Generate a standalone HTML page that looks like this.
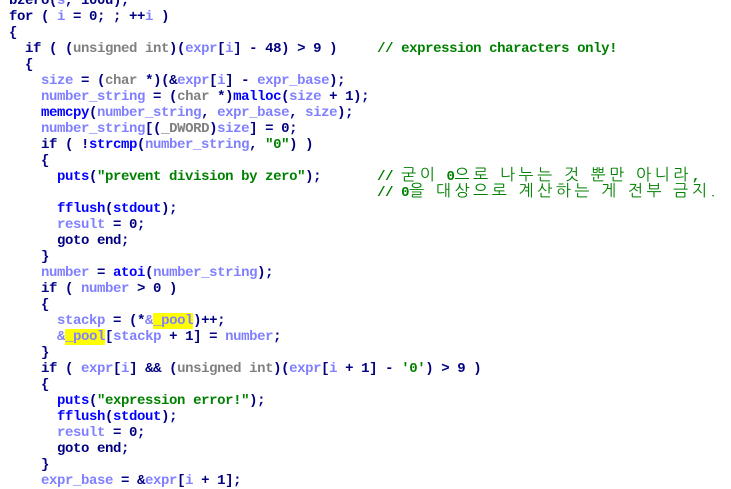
<!DOCTYPE html>
<html><head><meta charset="utf-8"><style>
html,body{margin:0;padding:0;background:#fff;width:731px;height:480px;overflow:hidden}
pre{position:absolute;left:9px;top:-7px;margin:0;font-family:"Liberation Mono",monospace;font-size:14px;letter-spacing:-0.4px;font-weight:bold;line-height:16px;color:#000080;white-space:pre}
.v{color:#8080ff}.f{color:#0000ff}.t{color:#808080}.s{color:#008000}.c{color:#008000}
.k{font-family:"NanumGothic","Noto Sans CJK KR",sans-serif;font-weight:normal;font-size:16px;line-height:0;letter-spacing:3.6px}
.h{background:#ffff00}
</style></head><body><pre>
bzero(<span class="v">s</span>, 100u);
for ( <span class="v">i</span> = 0; ; ++<span class="v">i</span> )
{
  if ( (<span class="t">unsigned int</span>)(<span class="v">expr</span>[<span class="v">i</span>] - 48) &gt; 9 )     <span class="c">// expression characters only!</span>
  {
    <span class="v">size</span> = (<span class="t">char</span> *)(&amp;<span class="v">expr</span>[<span class="v">i</span>] - <span class="v">expr_base</span>);
    <span class="v">number_string</span> = (<span class="t">char</span> *)<span class="f">malloc</span>(<span class="v">size</span> + 1);
    <span class="f">memcpy</span>(<span class="v">number_string</span>, <span class="v">expr_base</span>, <span class="v">size</span>);
    <span class="v">number_string</span>[(<span class="t">_DWORD</span>)<span class="v">size</span>] = 0;
    if ( !<span class="f">strcmp</span>(<span class="v">number_string</span>, <span class="s">"0"</span>) )
    {
      <span class="f">puts</span>(<span class="s">"prevent division by zero"</span>);       <span class="c">// <span class="k">굳이 </span>0<span class="k">으로 나누는 것 뿐만 아니라</span>,</span>
                                              <span class="c">// 0<span class="k">을 대상으로 계산하는 게 전부 금지.</span></span>
      <span class="f">fflush</span>(<span class="f">stdout</span>);
      <span class="v">result</span> = 0;
      goto end;
    }
    <span class="v">number</span> = <span class="f">atoi</span>(<span class="v">number_string</span>);
    if ( <span class="v">number</span> &gt; 0 )
    {
      <span class="v">stackp</span> = (*<span class="v">&amp;</span><span class="h v">_pool</span>)++;
      <span class="v">&amp;</span><span class="h v">_pool</span>[<span class="v">stackp</span> + 1] = <span class="v">number</span>;
    }
    if ( <span class="v">expr</span>[<span class="v">i</span>] &amp;&amp; (<span class="t">unsigned int</span>)(<span class="v">expr</span>[<span class="v">i</span> + 1] - <span class="s">'0'</span>) &gt; 9 )
    {
      <span class="f">puts</span>(<span class="s">"expression error!"</span>);
      <span class="f">fflush</span>(<span class="f">stdout</span>);
      <span class="v">result</span> = 0;
      goto end;
    }
    <span class="v">expr_base</span> = &amp;<span class="v">expr</span>[<span class="v">i</span> + 1];
</pre></body></html>
